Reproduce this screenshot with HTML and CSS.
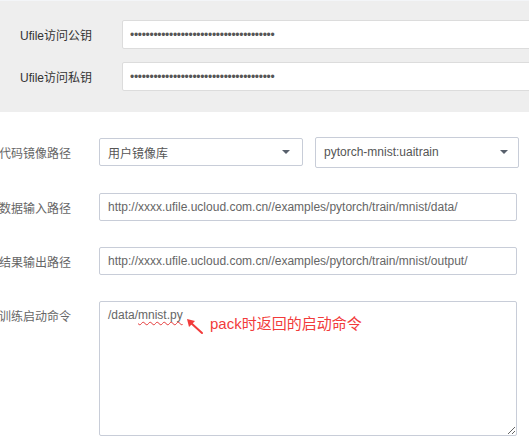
FILE: index.html
```html
<!DOCTYPE html>
<html lang="zh-CN">
<head>
<meta charset="utf-8">
<title>UAI Train</title>
<link rel="stylesheet" href="styles.css">
</head>
<body>
<div class="page">
  <div class="keys">
    <div class="krow">
      <label class="klabel">Ufile访问公钥</label>
      <input class="kinput" type="text" readonly value="•••••••••••••••••••••••••••••••••••••">
    </div>
    <div class="krow">
      <label class="klabel">Ufile访问私钥</label>
      <input class="kinput" type="text" readonly value="•••••••••••••••••••••••••••••••••••••">
    </div>
  </div>

  <div class="form">
    <div class="frow r1">
      <span class="flabel">代码镜像路径</span>
      <div class="select s1"><span class="stext">用户镜像库</span><i class="caret"></i></div>
      <div class="select s2"><span class="stext">pytorch-mnist:uaitrain</span><i class="caret"></i></div>
    </div>
    <div class="frow">
      <span class="flabel">数据输入路径</span>
      <input class="finput" type="text" readonly value="http://xxxx.ufile.ucloud.com.cn//examples/pytorch/train/mnist/data/">
    </div>
    <div class="frow">
      <span class="flabel">结果输出路径</span>
      <input class="finput" type="text" readonly value="http://xxxx.ufile.ucloud.com.cn//examples/pytorch/train/mnist/output/">
    </div>
    <div class="frow top">
      <span class="flabel tl">训练启动命令</span>
      <div class="tarea">
        <div class="tbox">/data/<span class="typo">mnist.py</span></div>
        <svg class="arrow" width="20" height="20" viewBox="0 0 20 20">
          <line x1="17" y1="16" x2="6" y2="6" stroke="#f23b3b" stroke-width="2" stroke-linecap="round"/>
          <polygon points="2,2 10,4 4,10" fill="#f23b3b"/>
        </svg>
        <span class="note">pack时返回的启动命令</span>
      </div>
    </div>
  </div>
</div>
</body>
</html>
```

FILE: styles.css
```css
* { box-sizing: border-box; }
html, body { margin: 0; padding: 0; background: #fff; overflow: hidden; }
body {
  font-family: "Liberation Sans", Arial, "Noto Sans CJK SC", sans-serif;
  font-size: 12px;
  width: 529px;
  height: 443px;
}
.page { width: 529px; }

.keys {
  background: #eeeeee;
  border-top: 1px solid #f3f5f8;
  padding: 19px 0 21px 0;
  display: flex;
  flex-direction: column;
  gap: 13px;
  overflow: hidden;
}
.krow { display: flex; align-items: center; height: 29px; }
.klabel {
  width: 122px;
  padding-left: 20px;
  color: #333;
  font-size: 12px;
  flex: none;
}
.kinput {
  flex: none;
  width: 420px;
  height: 29px;
  border: 1px solid #dcdcdc;
  border-radius: 2px;
  background: #fff;
  padding: 0 7px;
  font-family: "Liberation Sans", Arial, sans-serif;
  font-size: 12px;
  color: #555;
  letter-spacing: -0.3px;
  outline: none;
}

.form {
  padding-top: 25px;
  display: flex;
  flex-direction: column;
  gap: 26px;
}
.frow { display: flex; align-items: center; height: 28px; }
.frow.r1 { height: 30px; }
.frow.top { align-items: flex-start; height: 135px; }
.flabel {
  width: 100px;
  flex: none;
  color: #666;
  font-size: 12px;
  margin-left: -1px;
  padding-right: 1px;
}
.flabel.tl { margin-top: 8px; line-height: 16px; }

.select {
  position: relative;
  width: 204px;
  height: 28px;
  border: 1px solid #c8cdd8;
  border-radius: 2px;
  background: #fff;
  display: flex;
  align-items: center;
  padding-left: 8px;
  color: #555;
  flex: none;
}
.select.s2 { height: 31px; margin-left: 12px; }
.stext { flex: 1; }
.caret {
  width: 0;
  height: 0;
  border-left: 4px solid transparent;
  border-right: 4px solid transparent;
  border-top: 4px solid #58606c;
  margin-right: 12px;
}
.s2 .caret { margin-right: 10px; }

.finput {
  width: 418px;
  height: 28px;
  border: 1px solid #c8cdd8;
  border-radius: 2px;
  background: #fff;
  padding: 0 8px;
  font-family: "Liberation Sans", Arial, sans-serif;
  font-size: 12px;
  color: #666;
  outline: none;
  flex: none;
}

.tarea {
  position: relative;
  width: 418px;
  height: 135px;
  flex: none;
}
.tbox {
  width: 418px;
  height: 135px;
  border: 1px solid #c8cdd8;
  border-radius: 2px;
  background: #fff;
  padding: 5px 8px;
  line-height: 16px;
  color: #666;
  font-size: 12px;
  overflow: hidden;
  resize: both;
}
.typo {
  text-decoration: underline wavy #e53a3a;
  text-decoration-thickness: 1px;
  text-underline-offset: 2px;
}
.arrow { position: absolute; left: 86px; top: 16px; }
.note {
  position: absolute;
  left: 111px;
  top: 14px;
  font-size: 15px;
  line-height: 18px;
  color: #f23b3b;
  white-space: nowrap;
}
```
